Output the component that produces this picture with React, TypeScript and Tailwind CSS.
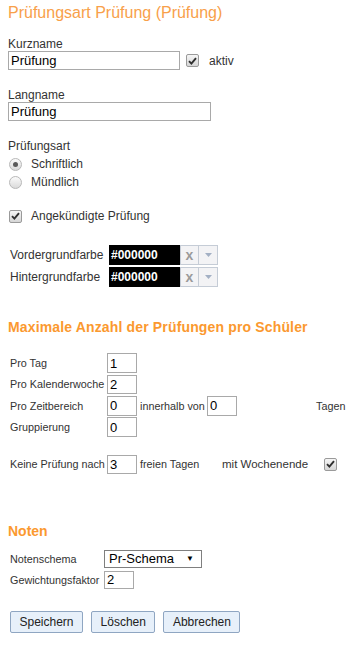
import React from 'react';

function Check() {
  return (
    <span className="flex h-[13px] w-[13px] items-center justify-center rounded-[2px] border border-[#9a9a9a] bg-gradient-to-b from-[#f6f6f6] to-[#d6d6d6]">
      <svg width="9" height="8" viewBox="0 0 9 8">
        <path d="M1 4.2 L3.4 6.6 L8 1.2" fill="none" stroke="#2f2f2f" strokeWidth="1.9" />
      </svg>
    </span>
  );
}

function Radio({ checked }: { checked?: boolean }) {
  return (
    <span className="flex h-[13px] w-[13px] items-center justify-center rounded-full border border-[#b8b8b8] bg-gradient-to-b from-[#fbfbfb] to-[#dadada]">
      {checked && <span className="h-[5px] w-[5px] rounded-full bg-[#5a5a5a]" />}
    </span>
  );
}

function TextBox({ value, className }: { value: string; className: string }) {
  return (
    <input
      readOnly
      defaultValue={value}
      className={`block border border-[#a9a9a9] bg-white px-[2px] text-[13px] text-black outline-none ${className}`}
    />
  );
}

function ColorRow({ label }: { label: string }) {
  return (
    <div className="flex h-[19.5px] items-center">
      <span className="w-[101px] pl-[2px] text-[12px]">{label}</span>
      <span className="flex h-full w-[71px] items-center bg-black px-[2px] text-[12px] font-bold text-white">#000000</span>
      <span className="flex h-full w-[19px] items-center justify-center border border-[#c5ccd6] bg-[#f3f3f5] text-[14px] font-bold leading-none text-[#9a9a9a]">x</span>
      <span className="flex h-full w-[19px] items-center justify-center border border-l-0 border-[#c5ccd6] bg-[#f3f3f5]">
        <svg width="7" height="4" viewBox="0 0 7 4"><path d="M0 0 H7 L3.5 4 Z" fill="#a3b0c4" /></svg>
      </span>
    </div>
  );
}

function NumRow({ label, value, children }: { label: string; value: string; children?: React.ReactNode }) {
  return (
    <div className="flex h-[21.33px] items-center text-[10.8px]">
      <span className="w-[99px] whitespace-nowrap pl-[2px]">{label}</span>
      <TextBox value={value} className="h-[19.5px] w-[30px]" />
      {children}
    </div>
  );
}

export default function App() {
  return (
    <div className="min-h-[646px] bg-white px-[8px] pt-[4px] font-['Liberation_Sans',Arial,sans-serif] text-[#333]">
      <h1 className="text-[16px] leading-[18px] text-[#f8a04a]">Prüfungsart Prüfung (Prüfung)</h1>

      <div className="mt-[15px] text-[12px] leading-[14px]">Kurzname</div>
      <div className="flex items-center">
        <TextBox value="Prüfung" className="h-[19px] w-[172px]" />
        <span className="ml-[6px]"><Check /></span>
        <span className="ml-[10px] text-[12px]">aktiv</span>
      </div>

      <div className="mt-[18px] text-[12px] leading-[14px]">Langname</div>
      <TextBox value="Prüfung" className="h-[19px] w-[203px]" />

      <div className="mt-[18px] text-[12px] leading-[14px]">Prüfungsart</div>
      <div className="mt-[2px] flex h-[18px] items-center text-[12px]">
        <span className="ml-[1px]"><Radio checked /></span>
        <span className="ml-[9px]">Schriftlich</span>
      </div>
      <div className="flex h-[18px] items-center text-[12px]">
        <span className="ml-[1px]"><Radio /></span>
        <span className="ml-[9px]">Mündlich</span>
      </div>

      <div className="mt-[16px] flex h-[18px] items-center text-[12px]">
        <span className="ml-[1px]"><Check /></span>
        <span className="ml-[9px]">Angekündigte Prüfung</span>
      </div>

      <div className="mt-[20px] flex flex-col gap-[2.5px]">
        <ColorRow label="Vordergrundfarbe" />
        <ColorRow label="Hintergrundfarbe" />
      </div>

      <h2 className="mt-[32px] text-[14px] font-bold leading-[16px] tracking-[0.15px] text-[#fb992f]">Maximale Anzahl der Prüfungen pro Schüler</h2>

      <div className="mt-[18px] flex flex-col">
        <NumRow label="Pro Tag" value="1" />
        <NumRow label="Pro Kalenderwoche" value="2" />
        <NumRow label="Pro Zeitbereich" value="0">
          <span className="ml-[3px] w-[67px] whitespace-nowrap">innerhalb von</span>
          <TextBox value="0" className="h-[19.5px] w-[30px]" />
          <span className="ml-[79px]">Tagen</span>
        </NumRow>
        <NumRow label="Gruppierung" value="0" />
      </div>

      <div className="mt-[17px] flex h-[19px] items-center text-[10.8px]">
        <span className="w-[99px] whitespace-nowrap pl-[2px]">Keine Prüfung nach</span>
        <TextBox value="3" className="h-[19px] w-[30px]" />
        <span className="ml-[3px] w-[82px] whitespace-nowrap">freien Tagen</span>
        <span className="whitespace-nowrap text-[11.5px]">mit Wochenende</span>
        <span className="ml-[16px]"><Check /></span>
      </div>

      <h2 className="mt-[49px] text-[14px] font-bold leading-[16px] text-[#fb992f]">Noten</h2>

      <div className="mt-[11px] flex h-[18px] items-center text-[10.8px]">
        <span className="w-[96px] pl-[2px]">Notenschema</span>
        <span className="flex h-[18px] w-[98px] items-center justify-between border border-[#7f7f7f] bg-white pl-[4px] pr-[7px] text-[13px] text-black">
          Pr-Schema
          <span className="text-[8px]">▼</span>
        </span>
      </div>
      <div className="mt-[3px] flex h-[18.5px] items-center text-[10.8px]">
        <span className="w-[96px] whitespace-nowrap pl-[2px]">Gewichtungsfaktor</span>
        <TextBox value="2" className="h-[18.5px] w-[30px]" />
      </div>

      <div className="ml-[2px] mt-[22px] flex gap-[8px]">
        {['Speichern', 'Löschen', 'Abbrechen'].map((b) => (
          <button
            key={b}
            type="button"
            className="h-[22px] rounded-[2px] border border-[#8fa6c2] bg-[#e7f0fa] px-[8.5px] text-[12px] text-[#222]"
          >
            {b}
          </button>
        ))}
      </div>
    </div>
  );
}
